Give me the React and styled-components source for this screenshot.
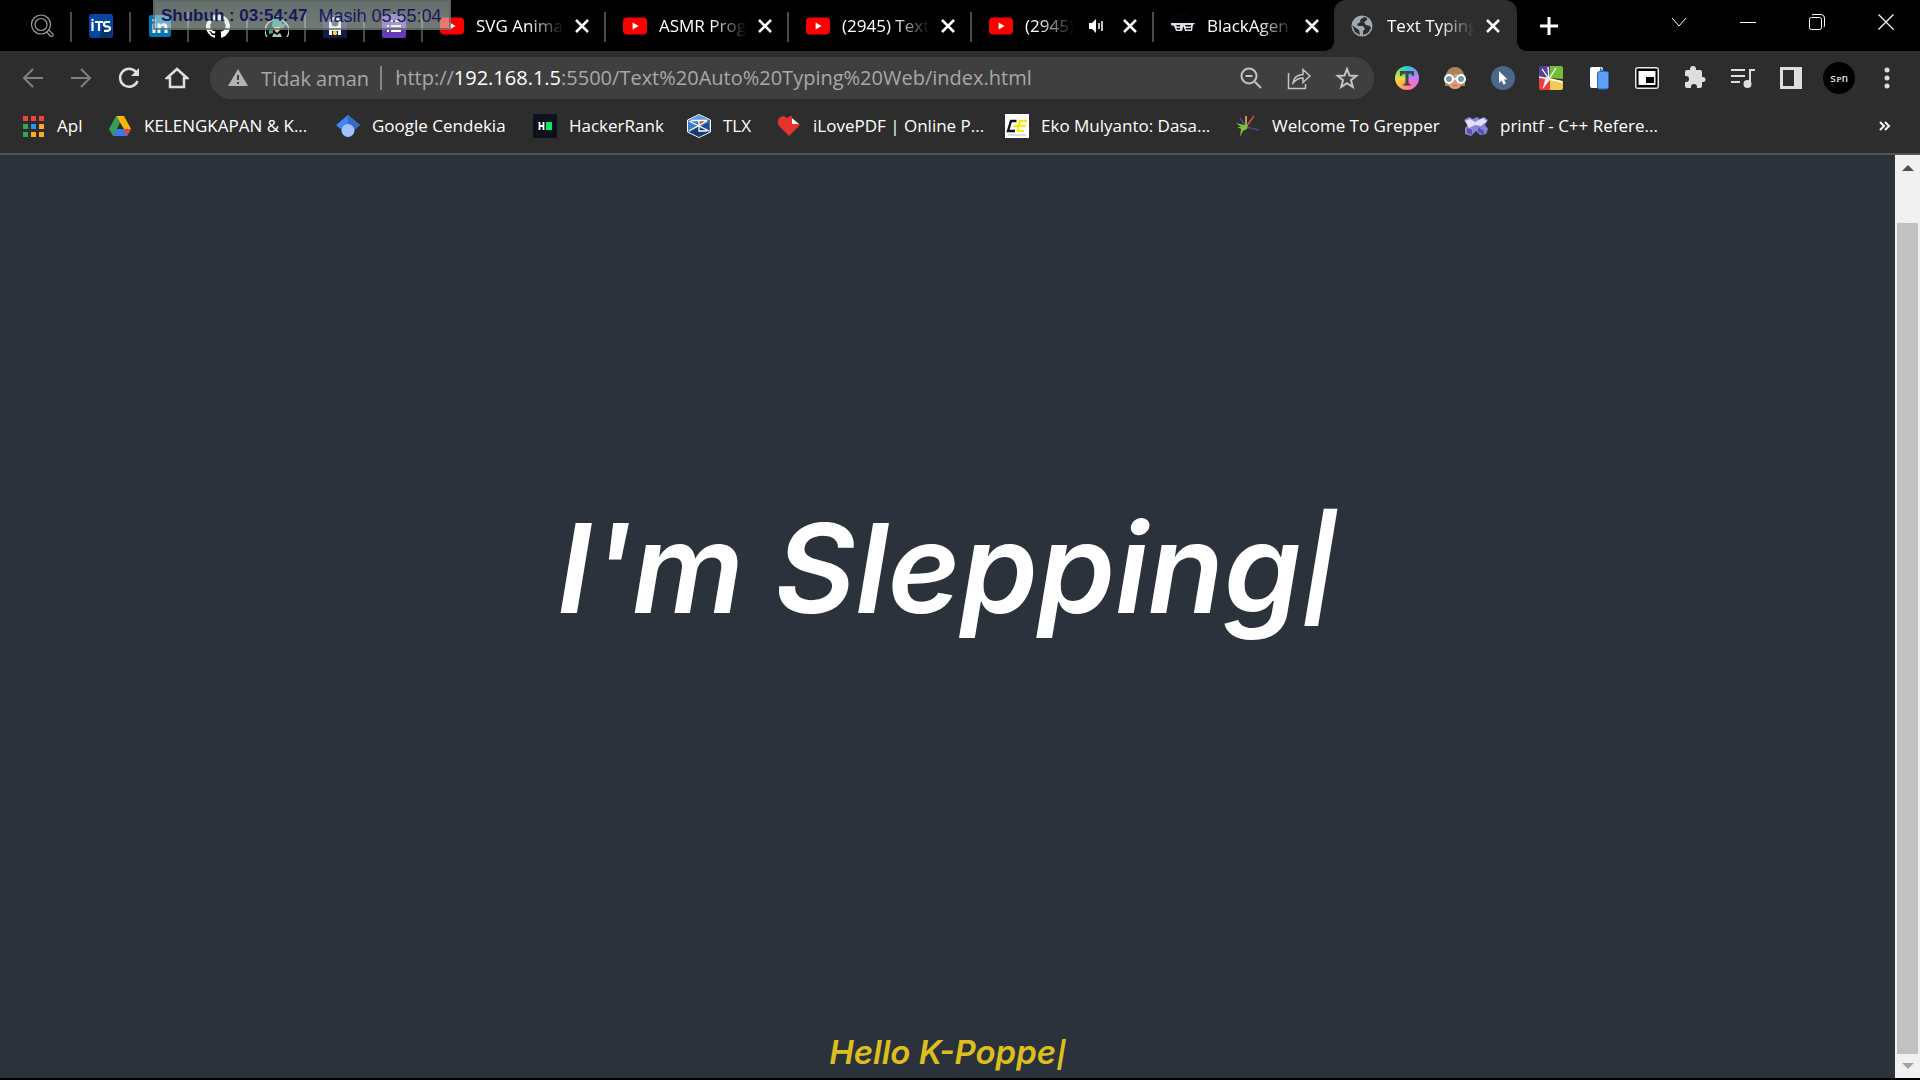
import React from "react";
import styled, { createGlobalStyle } from "styled-components";

const GlobalStyle = createGlobalStyle`
  * { box-sizing: border-box; }
  body { margin: 0; background: #000; }
  button { border: 0; background: none; padding: 0; color: inherit; font: inherit; display: flex; align-items: center; justify-content: center; }
  svg { display: block; flex: none; }
  a { color: inherit; text-decoration: none; }
`;

const Browser = styled.div`
  min-height: 100vh;
  display: flex;
  flex-direction: column;
  background: #000;
  color: #fff;
  font-family: "Open Sans", "Noto Sans", sans-serif;
  font-size: 17px;
`;

const TabStrip = styled.header`
  position: relative;
  height: 51px;
  display: flex;
`;

const PinnedTabs = styled.div`
  display: grid;
  grid-template-columns: 72px repeat(6, 1fr);
  width: 423px;
`;

const PinnedTab = styled.button`
  && {
    height: 51px;
    padding-left: ${(p) => (p.$first ? "12px" : "0")};
    background: linear-gradient(#4a4a4a, #4a4a4a) right 0 top 12px / 2px 30px no-repeat;
  }
`;

const Tab = styled.div`
  position: relative;
  width: ${(p) => p.$width}px;
  height: 51px;
  display: flex;
  align-items: center;
  padding: 0 14px 0 17px;
  background: ${(p) => (p.$active ? "#2d2d2d" : "transparent")};
  border-radius: 12px 12px 0 0;
  margin-left: ${(p) => (p.$active ? "-2px" : "0")};
  &::after {
    content: "";
    display: ${(p) => (p.$plain ? "none" : "block")};
    position: absolute;
    right: 0;
    top: 12px;
    width: 2px;
    height: 30px;
    background: #4a4a4a;
  }
`;

const TabCurve = styled.span`
  position: absolute;
  bottom: 0;
  width: 10px;
  height: 10px;
  ${(p) => (p.$side === "left" ? "left: -10px" : "right: -10px")};
  background: radial-gradient(
    circle at ${(p) => (p.$side === "left" ? "0 0" : "100% 0")},
    transparent 10px,
    #2d2d2d 10px
  );
`;

const TabTitle = styled.span`
  flex: 1;
  min-width: 0;
  margin-left: 12px;
  white-space: nowrap;
  line-height: 26px;
  mask-image: linear-gradient(to right, #000 calc(100% - 36px), transparent);
`;

const TabAudio = styled.span`
  margin: 0 8px 0 14px;
`;

const TabClose = styled.button`
  width: 20px;
  height: 20px;
  margin-left: 8px;
`;

const NewTab = styled.button`
  width: 64px;
  height: 51px;
`;

const WindowControls = styled.div`
  margin-left: auto;
  display: flex;
`;

const WindowButton = styled.button`
  width: 69px;
  height: 43px;
`;

const PrayerOverlay = styled.aside`
  position: absolute;
  left: 153px;
  top: 0;
  width: 298px;
  height: 30px;
  border: 2px solid rgba(90, 94, 92, 0.7);
  background: linear-gradient(rgba(200, 226, 216, 0.5), rgba(220, 232, 226, 0.52));
  font-family: "Liberation Sans", Arial, sans-serif;
  font-size: 18px;
  line-height: 28px;
  color: #1a1858;
  white-space: nowrap;
  display: flex;
  gap: 11px;
  padding-left: 6px;
`;

const PrayerTime = styled.b`
  font-size: 17px;
`;

const Toolbar = styled.nav`
  height: 54px;
  display: flex;
  align-items: center;
  padding: 0 9px;
  background: #2d2d2d;
`;

const ToolButton = styled.button`
  && {
    width: 48px;
    height: 48px;
    flex: none;
    color: ${(p) => (p.$dim ? "#808080" : "#dedede")};
  }
`;

const AddressBar = styled.form`
  flex: 1;
  min-width: 0;
  height: 42px;
  margin: 0 9px;
  padding: 0 3px 0 18px;
  border-radius: 21px;
  background: #3f3f3f;
  display: flex;
  align-items: center;
  font-size: 20px;
  color: #a8a8a8;
`;

const Security = styled.button`
  && {
    gap: 13px;
    height: 24px;
    padding-right: 11px;
    border-right: 2px solid #858585;
    white-space: nowrap;
  }
`;

const Url = styled.a`
  flex: 1;
  min-width: 0;
  margin-left: 13px;
  overflow: hidden;
  white-space: nowrap;
  line-height: 30px;
`;

const Host = styled.span`
  color: #fff;
`;

const BarButton = styled.button`
  && {
    width: 48px;
    height: 42px;
    color: #c4c4c4;
  }
`;

const Avatar = styled.span`
  width: 32px;
  height: 32px;
  border-radius: 50%;
  background: #000;
  color: #fff;
  font: 11px "DejaVu Sans Mono", monospace;
  display: flex;
  align-items: center;
  justify-content: center;
`;

const Bookmarks = styled.nav`
  height: 50px;
  display: flex;
  padding: 0 15px 0 21px;
  background: #2d2d2d;
  border-bottom: 2px solid #555;
`;

const Bookmark = styled.a`
  width: ${(p) => p.$width}px;
  height: 41px;
  flex: none;
  display: flex;
  align-items: center;
  gap: 12px;
  white-space: nowrap;
`;

const More = styled.button`
  width: 40px;
  height: 41px;
  margin-left: auto;
`;

const Viewport = styled.div`
  flex: 1;
  display: flex;
  margin-bottom: 2px;
  background: #2b323c;
`;

const Page = styled.main`
  flex: 1;
  display: flex;
  flex-direction: column;
  align-items: center;
  font-family: Inter, "Open Sans", sans-serif;
  font-style: italic;
`;

const Hero = styled.h1`
  flex: 1;
  margin: 0;
  padding-bottom: 48px;
  display: flex;
  align-items: center;
  font-size: 124px;
  line-height: 180px;
  font-weight: 600;
`;

const Greeting = styled.p`
  margin: 0;
  font-size: 33px;
  line-height: 46px;
  color: #dcbf1e;
  font-weight: 600;
`;

const Caret = styled.span`
  font-size: ${(p) => p.$size}px;
  font-weight: 700;
`;

const Scrollbar = styled.div`
  width: 25px;
  flex: none;
  background: #f1f1f1;
  display: flex;
  flex-direction: column;
  align-items: center;
  padding: 7px 2px 6px;
`;

const Thumb = styled.div`
  flex: 1;
  width: 21px;
  margin: 49px 0 6px;
  background: #c1c1c1;
`;

const Svg = ({ size = 24, box = 24, children, ...rest }) => (
  <svg width={size} height={size} viewBox={`0 0 ${box} ${box}`} fill="none" stroke="currentColor" aria-hidden="true" {...rest}>
    {children}
  </svg>
);

const YouTube = () => (
  <Svg stroke="none">
    <rect y="3.5" width="24" height="17" rx="4" fill="#f00" />
    <path d="M9.6 8.5v7l6-3.5z" fill="#fff" />
  </Svg>
);
const SearchLogo = () => (
  <Svg stroke="#a0a0a0" strokeWidth="1.2">
    <circle cx="11" cy="10.500" r="9.500" /><circle cx="11" cy="10.500" r="6" />
    <path d="M16.500 18l4 4q1.500 1 2.300 0t-.3-2.300l-4-4" />
  </Svg>
);
const Its = () => (
  <Svg stroke="none">
    <rect width="24" height="24" rx="3" fill="#0746a0" />
    <path d="M10 24l4-12 9 4v5l-3 3z" fill="#08336f" />
    <g stroke="#fff" strokeWidth="2.200" fill="none"><path d="M3.500 8v9M6 8h8M10 8v9M21 8h-3.500q-2.500 0-2.500 2.200t3 2.300 3 2-2.500 2.300H15" /></g>
    <circle cx="3.500" cy="6" r="1.200" fill="#fff" />
  </Svg>
);
const LinkedIn = () => (
  <Svg stroke="none">
    <rect x="1" y="1" width="22" height="22" rx="2" fill="#0078b6" />
    <path d="M4.500 9.500h3V19h-3zM9.500 9.500h3V11q1-1.800 3.400-1.800 3.600 0 3.600 4.300V19h-3v-5q0-2.300-1.800-2.300-2.200 0-2.200 2.600V19h-3z" fill="#fff" /><circle cx="6" cy="6.300" r="1.700" fill="#fff" />
  </Svg>
);
const GitHub = () => (
  <Svg stroke="none" fill="#fff">
    <path d="M12 .3a12 12 0 0 0-3.800 23.400c.6.100.8-.3.800-.6v-2c-3.300.7-4-1.600-4-1.600-.6-1.400-1.400-1.800-1.400-1.800-1-.7.100-.7.100-.7 1.200 0 1.900 1.200 1.900 1.200 1 1.800 2.800 1.300 3.500 1 0-.8.400-1.300.7-1.600-2.700-.3-5.500-1.300-5.500-6 0-1.200.5-2.300 1.300-3.100-.2-.4-.6-1.600 0-3.200 0 0 1-.3 3.400 1.200a11.500 11.500 0 0 1 6 0c2.300-1.500 3.300-1.200 3.300-1.200.6 1.600.2 2.800 0 3.200.9.800 1.300 1.900 1.300 3.200 0 4.600-2.800 5.600-5.500 5.900.5.400.9 1 .9 2.200v3.300c0 .3.100.7.800.6A12 12 0 0 0 12 .3" />
  </Svg>
);
const Mascot = () => (
  <Svg stroke="none">
    <path d="M2 23A11.300 11.300 0 0 1 12 5.500A11.300 11.300 0 0 1 22 23" stroke="#b8d2cc" strokeWidth="1.300" />
    <path d="M8 4l2-2h5l2 2v7l3-3 1 3-4 4H9l-2-3z" fill="#1f8f7c" /><path d="M9 13h6v3l-3 3-3-3z" fill="#edc29c" />
    <path d="M7 23l2-4 3 2 3-2 2 4z" fill="#a9c7bf" /><path d="M4 16l4-1v4l-4 1z" fill="#2cae8c" />
  </Svg>
);
const Robot = () => (
  <Svg stroke="none">
    <rect width="24" height="24" fill="#131b40" />
    <path d="M6 21V9a6 6 0 0 1 12 0v12h-3v-4H9v4z" fill="#fff" /><circle cx="12" cy="9" r="3.500" fill="#27305c" /><circle cx="12" cy="19" r="2.200" fill="#ffd34d" />
  </Svg>
);
const Forms = () => (
  <Svg stroke="none"><rect width="24" height="24" rx="2" fill="#673ab7" /><path d="M5 6h2v2H5zM9 6h10v2H9zM5 11h2v2H5zM9 11h10v2H9zM5 16h2v2H5zM9 16h10v2H9z" fill="#fff" /></Svg>
);
const Agent = () => (
  <Svg stroke="none"><circle cx="12" cy="12" r="11.500" stroke="#080830" /><path d="M0 9h24l-2 2-1 6h-7l-1.500-5L11 17H5l-2-5-3-1z" fill="#ddd" /><path d="M5 11h4v1.500H6zM5.500 14H9v1.500H6zM14 11h6v1.500h-5zM15 14h5v1.500h-5z" fill="#000" /></Svg>
);
const Globe = () => (
  <Svg stroke="none"><circle cx="11" cy="12" r="10.500" fill="#a3a9b2" /><path d="M13 3l-4 3 .5 2L6 10l1 2h5l2 3-2 2v4l5-2 3-5-1-2-4-1-2-3 3-2V4zM1 11l4 3 3 2 1 5-5-3z" fill="#2d2d2d" /></Svg>
);
const Speaker = () => (
  <Svg size={16} box={16}><path d="M1 5h3l4-4v14l-4-4H1z" fill="#fff" stroke="none" /><path d="M11 5v6M14 3v10" stroke="#fff" strokeWidth="1.500" /></Svg>
);
const Close = () => <Svg size={14} box={14} strokeWidth="2.500"><path d="M1 1l12 12M13 1L1 13" /></Svg>;

const Drive = () => (
  <Svg stroke="none"><path d="M8 2h8l7 13h-7z" fill="#fbb804" /><path d="M8 2l4 7-7 13-4-7z" fill="#34a050" /><path d="M5 22l3-7h15l-4 7z" fill="#3f78e8" /><path d="M16 15h7l-4 7z" fill="#ea4335" /></Svg>
);
const Apps = () => (
  <Svg stroke="none">
    {["#f44336", "#f44336", "#f44336", "#32a852", "#2196f3", "#ffa91f", "#32a852", "#ffa91f", "#ffa91f"].map((c, i) => (
      <rect key={i} x={2 + (i % 3) * 8} y={2 + Math.floor(i / 3) * 8} width="5" height="5" fill={c} />
    ))}
  </Svg>
);
const Scholar = () => (
  <Svg stroke="none"><path d="M12 1l12 10-7 6H7L0 11z" fill="#4285f4" /><path d="M12 1l12 10-7 6-5-5z" fill="#356ac3" /><circle cx="12" cy="16.500" r="6.500" fill="#a0c3ff" /></Svg>
);
const HackerRank = () => (
  <Svg stroke="none"><path fill="#0b111d" d="M0 0h24v24H0z" /><path d="M6.500 8v8M10.500 8v8M6 12h4.500" stroke="#fff" strokeWidth="1.800" /><path fill="#00ea64" d="M13 8h6v8h-6z" /></Svg>
);
const Tlx = () => (
  <Svg stroke="none"><path d="M12 .5l11.500 5.500v12L12 23.500.5 18V6z" fill="#3d7ac8" stroke="#fff" /><path d="M2 6l10-5 10 5-10 1z" fill="#5d9ce6" /><path d="M13 7h8l-8 4z" fill="#ed3b30" /><path d="M12 12l-10 6 10 5 10-5z" fill="#173b70" /><path d="M22 8v9l-8-5z" fill="#234f8e" /><path d="M2 7l20 10M20 7L2 17M12 7v10h8M4 6.500h16" stroke="#fff" strokeWidth="1.300" /></Svg>
);
const Heart = () => (
  <Svg stroke="none"><path d="M12 22L3 13C-3 6 5-1 10 4l3-2h2v8h8q0 2-3 4z" fill="#e5322d" /><path d="M15 4l7 6h-7z" fill="#fff" /></Svg>
);
const Eko = () => (
  <Svg stroke="none"><path fill="#fff" d="M0 0h24v24H0z" /><path d="M11.500 7H6L3 17h7" stroke="#111" strokeWidth="2.400" /><path d="M22 7h-7l-2.500 10M8 12h13M12 17h7" stroke="#ffeb00" strokeWidth="2.200" /><path d="M3 21h18" stroke="#bbb" /></Svg>
);
const Grepper = () => (
  <Svg strokeWidth="1.500"><path d="M10 13L4 4" stroke="#574394" /><path d="M10 13V2" stroke="#e6bd4d" /><path d="M10 13l8-11" stroke="#e54848" /><path d="M10 13l13 3" stroke="#574394" /><path d="M0 9l8 2 4 0-1 4-4 2-3 6 1-8-4-2 4 0z" fill="#76c13c" stroke="none" /></Svg>
);
const Cpp = () => (
  <Svg stroke="none"><path d="M0 6l5-3 4 2 4-2 3 2 4-2 4 3-3 5 3 4-2 5-6 1-4-4-5 5-6-2V14l3-3z" fill="#8a84db" /><path d="M1 7l5-2 5 3 8-4 4 3-6 5-6-1-6 3z" fill="#e3e1ff" /><path d="M3 14l5 2v5l-5-2zM14 13l6 4v4l-6-3z" fill="#5952b1" /></Svg>
);

const Wheel = styled.div`
  width: 24px;
  height: 24px;
  background: conic-gradient(#25c8f0, #7b9bf7, #d678f0, #ff70b0, #ff9c60, #ffd83c, #7be060, #25c8f0);
`;
const ColorT = () => (
  <Svg stroke="none">
    <defs><clipPath id="wheel"><circle cx="12" cy="12" r="12" /></clipPath></defs>
    <g clipPath="url(#wheel)"><foreignObject width="24" height="24"><Wheel /></foreignObject></g>
    <path d="M5 5h14v5h-1.500q-.5-2.500-4-2.500v9q0 1.500 2 1.500v1.500h-7V18q2 0 2-1.500v-9q-3.500 0-4 2.500H5z" fill="#444" />
  </Svg>
);
const Face = () => (
  <Svg stroke="none"><path d="M2 20q-1-19 10-19t10 19z" fill="#a88458" /><path d="M5 12q6-1 8-5 2 4 6 5v5q-1 6-7 6t-7-6z" fill="#e09a78" /><circle cx="6" cy="13" r="4" fill="#6ba0ab" stroke="#fff" strokeWidth="2" /><circle cx="18" cy="13" r="4" fill="#6ba0ab" stroke="#fff" strokeWidth="2" /><path d="M10 13h4" stroke="#fff" strokeWidth="1.500" /><path d="M10 19.500h4" stroke="#b96b53" /></Svg>
);
const Pointer = () => <Svg stroke="none"><circle cx="12" cy="12" r="12" fill="#4d678a" /><path d="M8 5v12l2.500-2.500 2 4 2.500-1-2-4H16.500z" fill="#fff" /></Svg>;
const Burst = () => (
  <Svg stroke="none"><path fill="#574394" d="M0 2q0-2 2-2h9v12H0z" /><path fill="#74bd3a" d="M11 0h11q2 0 2 2v11l-13-1z" /><path fill="#ef3d3d" d="M0 12h11v12H2q-2 0-2-2z" /><path fill="#f1ca58" d="M11 12l13 3v7q0 2-2 2H11z" /><path d="M10 13L3 3M10 13L9 1M10 13l7-11M10 13l13 3M10 13L0 11M10 13L4 22" stroke="#fff" strokeWidth="1.300" /><path d="M7 11l5 2-3 3-5 6 2-8z" fill="#fff" /></Svg>
);
const Pages = () => <Svg stroke="none"><rect x="3" y="1" width="13" height="21" rx="2" fill="#fff" /><path d="M13 1l4 4h-4z" fill="#4e7fc0" /><rect x="10.500" y="5.500" width="11" height="17.500" rx="2" fill="#5ba0fa" stroke="#3767a8" /></Svg>;
const Pip = () => <Svg stroke="none"><rect y="1" width="24" height="22" rx="3" fill="#e9e9e9" /><rect x="1.500" y="2.500" width="21" height="19" rx="1" fill="#000" /><path fill="#fff" d="M3.500 5h17v14h-17z" /><path fill="#000" d="M11 11h8v6h-8z" /></Svg>;
const Puzzle = () => <Svg stroke="none" fill="#dedede"><path d="M20 11h-1V6q0-2-2-2h-4V3a3 3 0 0 0-6 0v1H4Q2 4 2 6v4h1a3 3 0 0 1 0 6H2v4q0 2 2 2h4v-1a3 3 0 0 1 6 0v1h3q2 0 2-2v-4h1a2.500 2.500 0 0 0 0-5z" /></Svg>;
const Queue = () => <Svg strokeWidth="2"><path d="M0 4h14M0 10h14M0 16h9" /><path d="M19 18V4h5" /><circle cx="16.500" cy="18" r="3" fill="currentColor" /></Svg>;

const tabs = [
  { title: "SVG Anima", width: 183, icon: <YouTube /> },
  { title: "ASMR Prog", width: 183, icon: <YouTube /> },
  { title: "(2945) Text", width: 183, icon: <YouTube /> },
  { title: "(2945)", width: 182, icon: <YouTube />, audio: true },
  { title: "BlackAgen", width: 182, icon: <Agent />, plain: true },
  { title: "Text Typing", width: 183, icon: <Globe />, plain: true, active: true },
];

const pinned = [
  ["Search", <SearchLogo />], ["ITS", <Its />], ["LinkedIn", <LinkedIn />], ["GitHub", <GitHub />],
  ["Mascot", <Mascot />], ["Robot", <Robot />], ["Forms", <Forms />],
];

const bookmarks = [
  { label: "Apl", width: 87, icon: <Apps /> },
  { label: "KELENGKAPAN & K...", width: 228, icon: <Drive /> },
  { label: "Google Cendekia", width: 197, icon: <Scholar /> },
  { label: "HackerRank", width: 154, icon: <HackerRank /> },
  { label: "TLX", width: 90, icon: <Tlx /> },
  { label: "iLovePDF | Online P...", width: 228, icon: <Heart /> },
  { label: "Eko Mulyanto: Dasa...", width: 231, icon: <Eko /> },
  { label: "Welcome To Grepper", width: 228, icon: <Grepper /> },
  { label: "printf - C++ Refere...", width: 228, icon: <Cpp /> },
];

const extensions = [
  ["Text colour", <ColorT />], ["Reader", <Face />], ["Pointer", <Pointer />], ["Grepper", <Burst />],
  ["Pages", <Pages />], ["Picture in picture", <Pip />], ["Extensions", <Puzzle />], ["Media", <Queue />],
  ["Side panel", <Svg strokeWidth="0"><path d="M1 1h22v22H1zM4 4v16h11V4z" fill="currentColor" fillRule="evenodd" /></Svg>],
  ["Profile", <Avatar>sᴘn</Avatar>],
  ["Menu", <Svg stroke="none" fill="currentColor"><circle cx="12" cy="4" r="2.500" /><circle cx="12" cy="12" r="2.500" /><circle cx="12" cy="20" r="2.500" /></Svg>],
];

export default function App() {
  return (
    <Browser>
      <GlobalStyle />
      <TabStrip>
        <PinnedTabs>
          {pinned.map(([name, icon], i) => (
            <PinnedTab key={name} aria-label={name} $first={i === 0}>{icon}</PinnedTab>
          ))}
        </PinnedTabs>
        {tabs.map((t, i) => (
          <Tab key={i} $width={t.width} $active={t.active} $plain={t.plain}>
            {t.active && <TabCurve $side="left" />}
            {t.icon}
            <TabTitle>{t.title}</TabTitle>
            {t.audio && <TabAudio><Speaker /></TabAudio>}
            <TabClose aria-label="Close tab"><Close /></TabClose>
            {t.active && <TabCurve $side="right" />}
          </Tab>
        ))}
        <NewTab aria-label="New tab"><Svg size={18} box={18} strokeWidth="3"><path d="M9 0v18M0 9h18" /></Svg></NewTab>
        <WindowControls>
          <WindowButton aria-label="Search tabs"><Svg size={16} box={16}><path d="M1 4l7 8 7-8" /></Svg></WindowButton>
          <WindowButton aria-label="Minimize"><Svg size={16} box={16}><path d="M0 8.500h16" /></Svg></WindowButton>
          <WindowButton aria-label="Restore"><Svg size={16} box={16}><rect x=".5" y="3.500" width="12" height="12" rx="2" /><path d="M3 1q1-.5 2-.5h7q3.500 0 3.500 3.500v7q0 1-.5 2" /></Svg></WindowButton>
          <WindowButton aria-label="Close"><Svg size={16} box={16} strokeWidth="1.200"><path d="M.5.5l15 15M15.500.5l-15 15" /></Svg></WindowButton>
        </WindowControls>
        <PrayerOverlay><PrayerTime>Shubuh : 03:54:47</PrayerTime><span>Masih 05:55:04</span></PrayerOverlay>
      </TabStrip>
      <Toolbar>
        <ToolButton aria-label="Back" $dim><Svg strokeWidth="2"><path d="M22 12H3M12 3l-9 9 9 9" /></Svg></ToolButton>
        <ToolButton aria-label="Forward" $dim><Svg strokeWidth="2"><path d="M2 12h19M12 3l9 9-9 9" /></Svg></ToolButton>
        <ToolButton aria-label="Reload"><Svg strokeWidth="2.500"><path d="M20.500 15A9 9 0 1 1 19 6" /><path d="M22 2v8h-8z" fill="currentColor" stroke="none" /></Svg></ToolButton>
        <ToolButton aria-label="Home"><Svg strokeWidth="2.500"><path d="M2 12L12 3l10 9h-3v9H5v-9z" /></Svg></ToolButton>
        <AddressBar>
          <Security type="button">
            <Svg size={20} box={20} stroke="none"><path d="M10 1l10 17H0z" fill="#b0b3b8" /><path d="M9 7h2v5H9zM9 14h2v2H9z" fill="#3f3f3f" /></Svg>
            Tidak aman
          </Security>
          <Url href="#">http://<Host>192.168.1.5</Host>:5500/Text%20Auto%20Typing%20Web/index.html</Url>
          <BarButton type="button" aria-label="Zoom"><Svg strokeWidth="2"><circle cx="10" cy="10" r="7.500" /><path d="M16 16l6 6M6.500 10h7" /></Svg></BarButton>
          <BarButton type="button" aria-label="Share"><Svg strokeWidth="1.500"><path d="M1.500 7v15.500h17V18M6 17q1-8 10-8.500V3.500l7 6.500-7 6.500V12q-6 0-10 5z" /></Svg></BarButton>
          <BarButton type="button" aria-label="Bookmark"><Svg strokeWidth="2"><path d="M12 3l2.500 6.500 6.800.400-5.300 4.300 1.800 6.800-5.800-3.800L6.200 21 8 14.200 2.700 9.900l6.800-.4z" /></Svg></BarButton>
        </AddressBar>
        {extensions.map(([name, icon]) => <ToolButton key={name} aria-label={name}>{icon}</ToolButton>)}
      </Toolbar>
      <Bookmarks>
        {bookmarks.map((b) => <Bookmark key={b.label} href="#" $width={b.width}>{b.icon}{b.label}</Bookmark>)}
        <More aria-label="More bookmarks"><Svg size={12} box={12} strokeWidth="2"><path d="M1 2l4 4-4 4M6 2l4 4-4 4" /></Svg></More>
      </Bookmarks>
      <Viewport>
        <Page>
          <Hero>I'm Slepping<Caret $size={98}>|</Caret></Hero>
          <Greeting>Hello K-Poppe<Caret $size={26}>|</Caret></Greeting>
        </Page>
        <Scrollbar>
          <Svg size={12} box={12} stroke="none"><path d="M0 9l6-6 6 6z" fill="#505050" /></Svg>
          <Thumb />
          <Svg size={12} box={12} stroke="none"><path d="M0 3l6 6 6-6z" fill="#a3a3a3" /></Svg>
        </Scrollbar>
      </Viewport>
    </Browser>
  );
}
